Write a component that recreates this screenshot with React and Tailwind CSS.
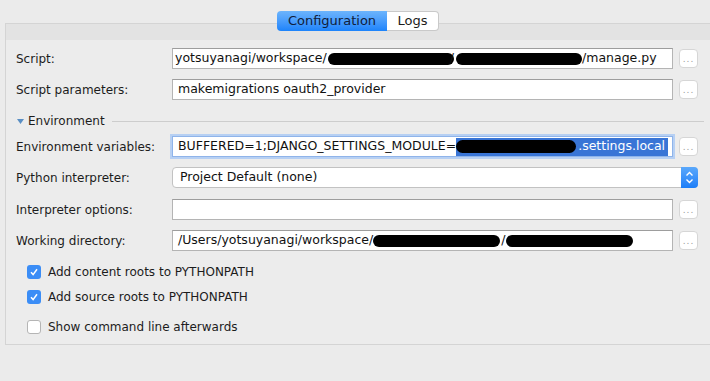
import React from "react";

const font = { fontFamily: '"DejaVu Sans", "Lucida Grande", sans-serif' };

function Blob({ w, className = "" }) {
    return <span className={`inline-block h-[12px] shrink-0 rounded-full bg-black ${className}`} style={{ width: w }} />;
}

function DotsButton() {
    return (
        <button className="ml-[6px] flex h-[19px] w-[19px] items-end justify-center rounded-[4px] border border-[#d6d6d6] bg-white pb-[3px]">
            <span className="text-[9px] leading-none tracking-[1px] text-[#9a9a9a]">...</span>
        </button>
    );
}

function Field({ label, children, focused }) {
    return (
        <div className="flex h-[21px] items-center">
            <div className="w-[156px] text-[12px] text-[#1c1c1c]">{label}</div>
            <div
                className={`flex h-[21px] w-[501px] items-center overflow-hidden whitespace-nowrap bg-white pl-[5px] text-[12.5px] text-[#111] ${
                    focused
                        ? "border border-[#8fb4ea] shadow-[0_0_0_2px_#b7d0f3]"
                        : "border border-[#b4b4b4] border-t-[#9d9d9d]"
                }`}
            >
                {children}
            </div>
            <DotsButton />
        </div>
    );
}

function Check({ checked, label }) {
    return (
        <div className="flex items-center gap-[7px] pl-[11px] text-[12px] text-[#1c1c1c]">
            {checked ? (
                <span className="flex h-[14px] w-[14px] items-center justify-center rounded-[3px] bg-[#3b8df6]">
                    <svg width="10" height="10" viewBox="0 0 10 10">
                        <path d="M2 5.3 L4.1 7.6 L8 2.2" stroke="white" strokeWidth="1.5" fill="none" />
                    </svg>
                </span>
            ) : (
                <span className="h-[14px] w-[14px] rounded-[3px] border border-[#b5b5b5] bg-white" />
            )}
            <span>{label}</span>
        </div>
    );
}

export default function App() {
    return (
        <div className="h-[381px] w-[710px] overflow-hidden bg-[#ebebeb]" style={font}>
            <div className="relative z-10 flex pl-[277px] pt-[11px]">
                <div className="flex h-[20px] w-[110px] items-center justify-center rounded-l-[4px] bg-gradient-to-b from-[#6cb4fc] to-[#1b83fb] text-[13px] text-[#10203a]">
                    Configuration
                </div>
                <div className="flex h-[20px] w-[52px] items-center justify-center rounded-r-[4px] border border-l-0 border-[#c9c9c9] bg-white text-[13px] text-[#1c1c1c]">
                    Logs
                </div>
            </div>
            <div className="ml-[5px] mt-[-8px] w-[720px] border border-[#d4d4d4] bg-[#ececec]">
                <div className="h-[16px] bg-[#e3e3e3]" />
                <div className="flex flex-col pl-[10px] pt-[8px]">
                    <Field label="Script:">
                        <span className="ml-[-3px]">yotsuyanagi/workspace/</span>
                        <Blob w={126} className="ml-[1px]" />
                        <span className="ml-[-4px]">/</span>
                        <Blob w={126} className="ml-[2px]" />
                        <span>/manage.py</span>
                    </Field>
                    <div className="h-[10px]" />
                    <Field label="Script parameters:">makemigrations oauth2_provider</Field>

                    <div className="mt-[14px] flex h-[14px] items-center">
                        <svg width="7" height="5" viewBox="0 0 7 5" className="ml-[1px]">
                            <path d="M0 0 L7 0 L3.5 5 Z" fill="#5a8fc4" />
                        </svg>
                        <span className="ml-[4px] text-[12px] text-[#1c1c1c]">Environment</span>
                        <div className="ml-[7px] h-px w-[592px] bg-[#cdcdcd]" />
                    </div>

                    <div className="h-[8px]" />
                    <Field label="Environment variables:" focused>
                        <span>BUFFERED=1;DJANGO_SETTINGS_MODULE=</span>
                        <span className="flex h-[18px] items-center bg-[#3975d6] pr-[3px] text-white">
                            <Blob w={120} className="h-[13px]" />
                            <span className="ml-[2px]">.settings.local</span>
                        </span>
                    </Field>
                    <div className="h-[10px]" />
                    <div className="flex h-[21px] items-center">
                        <div className="w-[156px] text-[12px] text-[#1c1c1c]">Python interpreter:</div>
                        <div className="flex h-[21px] w-[526px] items-center justify-between rounded-[4px] border border-[#c2c2c2] bg-white pl-[7px] text-[12.5px] text-[#111]">
                            <span>Project Default (none)</span>
                            <span className="mr-[-1px] flex h-[21px] w-[17px] items-center justify-center rounded-r-[4px] bg-gradient-to-b from-[#5aa8fb] to-[#1b7ef8]">
                                <svg width="9" height="13" viewBox="0 0 9 13">
                                    <path d="M1.5 4.5 L4.5 1.5 L7.5 4.5 M1.5 8.5 L4.5 11.5 L7.5 8.5" stroke="white" strokeWidth="1.4" fill="none" />
                                </svg>
                            </span>
                        </div>
                    </div>
                    <div className="h-[11px]" />
                    <Field label="Interpreter options:" />
                    <div className="h-[10px]" />
                    <Field label="Working directory:">
                        <span>/Users/yotsuyanagi/workspace/</span>
                        <Blob w={127} />
                        <span className="ml-[1px]">/</span>
                        <Blob w={127} className="ml-[1px]" />
                    </Field>

                    <div className="mt-[14px] flex flex-col">
                        <div className="flex h-[14px] items-center">
                            <Check checked label="Add content roots to PYTHONPATH" />
                        </div>
                        <div className="mt-[11px] flex h-[14px] items-center">
                            <Check checked label="Add source roots to PYTHONPATH" />
                        </div>
                        <div className="mt-[16px] flex h-[14px] items-center">
                            <Check label="Show command line afterwards" />
                        </div>
                    </div>
                    <div className="h-[10px]" />
                </div>
            </div>
        </div>
    );
}
